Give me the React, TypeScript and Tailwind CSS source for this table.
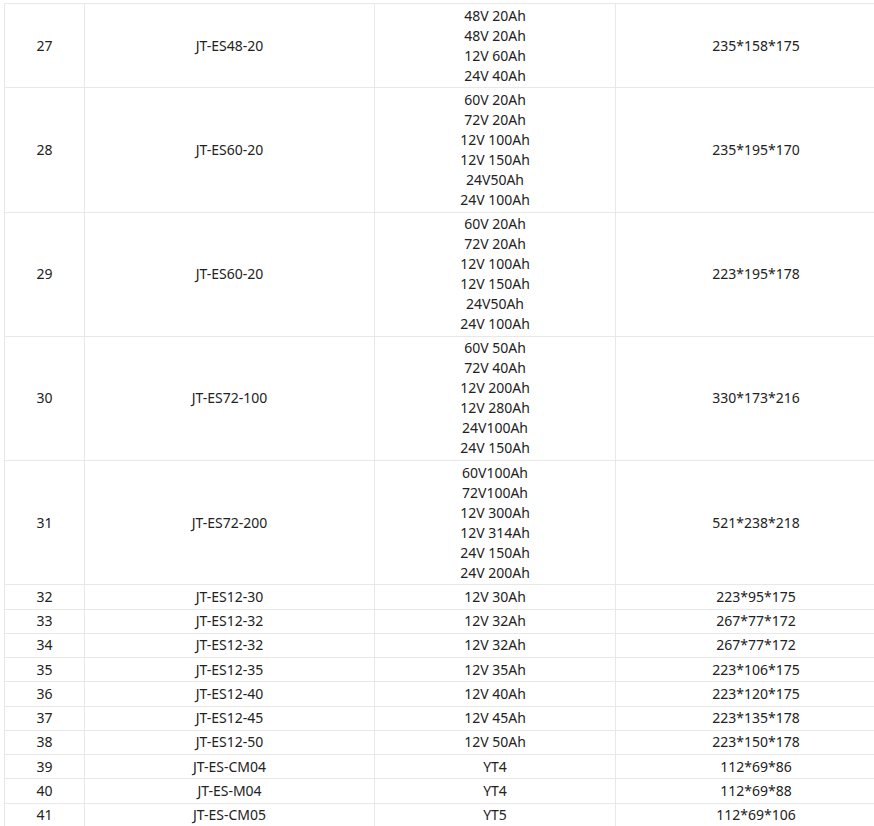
import React from 'react';

type Row = { no: number; model: string; specs: string[]; size: string };

const rows: Row[] = [
  { no: 27, model: 'JT-ES48-20', specs: ['48V 20Ah', '48V 20Ah', '12V 60Ah', '24V 40Ah'], size: '235*158*175' },
  { no: 28, model: 'JT-ES60-20', specs: ['60V 20Ah', '72V 20Ah', '12V 100Ah', '12V 150Ah', '24V50Ah', '24V 100Ah'], size: '235*195*170' },
  { no: 29, model: 'JT-ES60-20', specs: ['60V 20Ah', '72V 20Ah', '12V 100Ah', '12V 150Ah', '24V50Ah', '24V 100Ah'], size: '223*195*178' },
  { no: 30, model: 'JT-ES72-100', specs: ['60V 50Ah', '72V 40Ah', '12V 200Ah', '12V 280Ah', '24V100Ah', '24V 150Ah'], size: '330*173*216' },
  { no: 31, model: 'JT-ES72-200', specs: ['60V100Ah', '72V100Ah', '12V 300Ah', '12V 314Ah', '24V 150Ah', '24V 200Ah'], size: '521*238*218' },
  { no: 32, model: 'JT-ES12-30', specs: ['12V 30Ah'], size: '223*95*175' },
  { no: 33, model: 'JT-ES12-32', specs: ['12V 32Ah'], size: '267*77*172' },
  { no: 34, model: 'JT-ES12-32', specs: ['12V 32Ah'], size: '267*77*172' },
  { no: 35, model: 'JT-ES12-35', specs: ['12V 35Ah'], size: '223*106*175' },
  { no: 36, model: 'JT-ES12-40', specs: ['12V 40Ah'], size: '223*120*175' },
  { no: 37, model: 'JT-ES12-45', specs: ['12V 45Ah'], size: '223*135*178' },
  { no: 38, model: 'JT-ES12-50', specs: ['12V 50Ah'], size: '223*150*178' },
  { no: 39, model: 'JT-ES-CM04', specs: ['YT4'], size: '112*69*86' },
  { no: 40, model: 'JT-ES-M04', specs: ['YT4'], size: '112*69*88' },
  { no: 41, model: 'JT-ES-CM05', specs: ['YT5'], size: '112*69*106' },
];

const cell = 'border border-[#e8e8e8] px-2 py-[1.625px] text-center align-middle';

const App: React.FC = () => {
  return (
    <div className="w-[874px] h-[826px] overflow-hidden bg-white">
      <div className="pt-[3px] pl-[4px]">
        <table
          className="border-collapse table-fixed w-[892px] text-[14px] leading-[20px] text-[#222]"
          style={{ fontFamily: '"Noto Sans", "Noto Sans CJK SC", sans-serif' }}
        >
          <colgroup>
            <col className="w-[80px]" />
            <col className="w-[290px]" />
            <col className="w-[241px]" />
            <col className="w-[281px]" />
          </colgroup>
          <tbody>
            {rows.map(r => (
              <tr key={r.no}>
                <td className={cell}>{r.no}</td>
                <td className={cell}>{r.model}</td>
                <td className={cell}>
                  {r.specs.map((s, i) => (
                    <div key={i}>{s}</div>
                  ))}
                </td>
                <td className={cell}>{r.size}</td>
              </tr>
            ))}
          </tbody>
        </table>
      </div>
    </div>
  );
};

export default App;
